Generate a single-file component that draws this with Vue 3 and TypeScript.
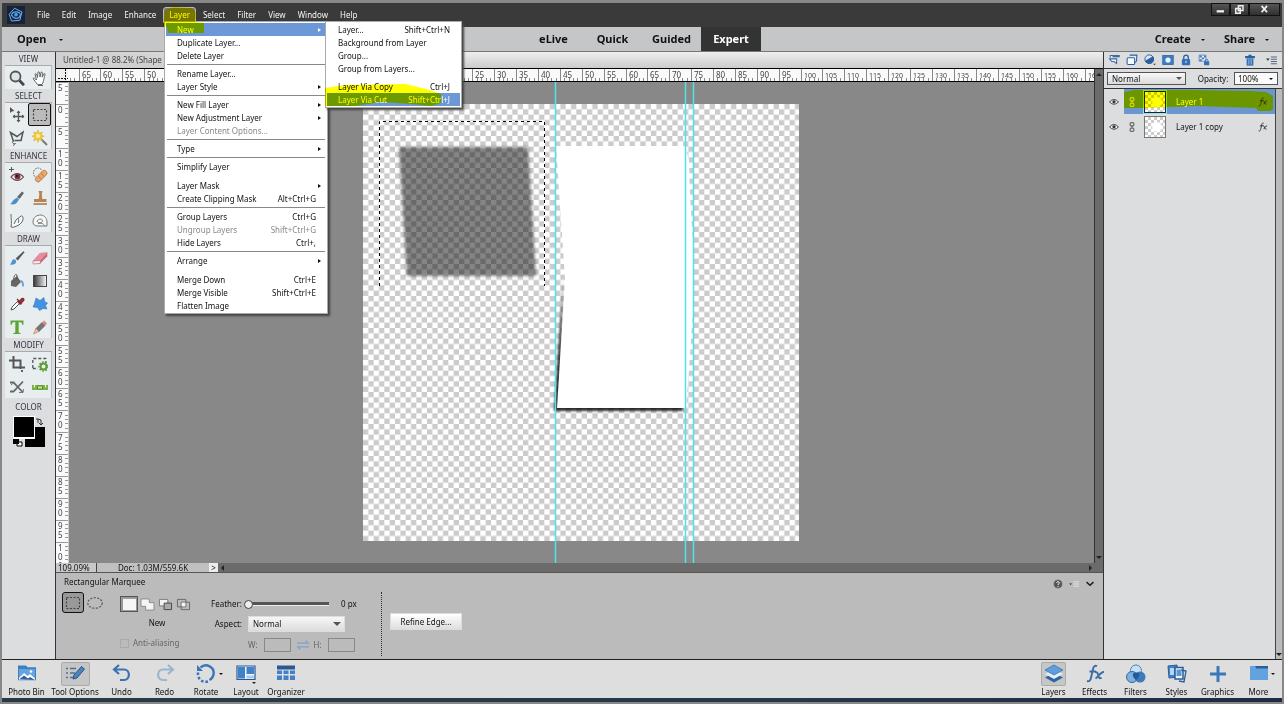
<script setup lang="ts">
import { ref } from 'vue'

interface MenuEntry {
  label?: string
  keys?: string
  sub?: boolean
  off?: boolean
  active?: boolean
  rule?: 'line' | 'space'
}

const menus = ['File', 'Edit', 'Image', 'Enhance', 'Layer', 'Select', 'Filter', 'View', 'Window', 'Help']
const modes = ['eLive', 'Quick', 'Guided', 'Expert']

const layerMenu: MenuEntry[] = [
  { label: 'New', sub: true, active: true },
  { label: 'Duplicate Layer...' },
  { label: 'Delete Layer' },
  { rule: 'line' },
  { label: 'Rename Layer...' },
  { label: 'Layer Style', sub: true },
  { rule: 'line' },
  { label: 'New Fill Layer', sub: true },
  { label: 'New Adjustment Layer', sub: true },
  { label: 'Layer Content Options...', off: true },
  { rule: 'line' },
  { label: 'Type', sub: true },
  { rule: 'line' },
  { label: 'Simplify Layer' },
  { rule: 'space' },
  { label: 'Layer Mask', sub: true },
  { label: 'Create Clipping Mask', keys: 'Alt+Ctrl+G' },
  { rule: 'line' },
  { label: 'Group Layers', keys: 'Ctrl+G' },
  { label: 'Ungroup Layers', keys: 'Shift+Ctrl+G', off: true },
  { label: 'Hide Layers', keys: 'Ctrl+,' },
  { rule: 'line' },
  { label: 'Arrange', sub: true },
  { rule: 'space' },
  { label: 'Merge Down', keys: 'Ctrl+E' },
  { label: 'Merge Visible', keys: 'Shift+Ctrl+E' },
  { label: 'Flatten Image' },
]

const newMenu: MenuEntry[] = [
  { label: 'Layer...', keys: 'Shift+Ctrl+N' },
  { label: 'Background from Layer' },
  { label: 'Group...' },
  { label: 'Group from Layers...' },
  { rule: 'space' },
  { label: 'Layer Via Copy', keys: 'Ctrl+J' },
  { label: 'Layer Via Cut', keys: 'Shift+Ctrl+J', active: true },
]

const toolGroups = [
  { name: 'VIEW', tools: ['zoom', 'hand'] },
  { name: 'SELECT', tools: ['move', 'marquee', 'lasso', 'wand'] },
  { name: 'ENHANCE', tools: ['redeye', 'heal', 'smart', 'stamp', 'smudge', 'sponge'] },
  { name: 'DRAW', tools: ['brush', 'eraser', 'bucket', 'gradient', 'dropper', 'shape', 'type', 'pencil'] },
  { name: 'MODIFY', tools: ['crop', 'recompose', 'cutter', 'straighten'] },
]

const icons: Record<string, string> = {
  zoom: '<circle cx="6.500" cy="6.500" r="5" fill="#dfe6e8" stroke="#555" stroke-width="1.800"/><path d="M10.500 10.500 15 15.200" stroke="#444" stroke-width="2.800"/>',
  hand: '<path d="M5.500 14.500C3.500 12 2.500 10.500 1 8.500c1-1 2.200 0 3.500 1.500L3 4c1-1 1.700 0 2.500 3.500L6 2c1.200-1 1.700 0 2 5l1.200-5c1.300-.5 1.300.7 1 5.200l2-3.700c1.200-.2.8 1.500-.2 5-.5 3-1 4-2 6z" fill="#fff" stroke="#555" stroke-width=".9"/><path d="M6 15.500h5" stroke="#666"/>',
  move: '<path d="M1 0v6l1.700-1.500L5.500 4z" fill="#555"/><path d="M9.500 4v11M4 9.500h11" stroke="#555" stroke-width="1.300"/><path d="M7.500 6l2-2.500 2 2.500zM7.500 13l2 2.500 2-2.500zM6 7.500l-2.500 2L6 11.500zM13 7.500l2.500 2-2.500 2z" fill="#555"/>',
  marquee: '<path d="M1.500 2.500h13v11h-13z" fill="none" stroke="#444" stroke-width="1.200" stroke-dasharray="2 1.500"/>',
  ellipse: '<ellipse cx="8" cy="8" rx="7.200" ry="5.300" fill="none" stroke="#555" stroke-width="1.200" stroke-dasharray="2 1.500"/>',
  lasso: '<path d="M4.500 11.500 1.500 2.500l6.500 4L14 2l-2 8.500H5.500" fill="none" stroke="#555" stroke-width="1.500"/><path d="M5 11c-2 0-2 3 .5 2.500S5 15 4 15.500" fill="none" stroke="#555"/>',
  wand: '<path d="M8.500 8.500 15 15" stroke="#777" stroke-width="2"/><path d="m6 0 1.200 3L10.500 2 9.200 5l3 1.200-3 1.200L10.500 11 7.200 9.300 6 12.500 4.800 9.300 1.500 11 2.800 7.500 0 6.200 2.800 5 1.500 2l3.300 1z" fill="#f3c93c" stroke="#d8a62a" stroke-width=".5"/><circle cx="6" cy="6" r="2" fill="#fff0a0"/>',
  redeye: '<path d="M0 2.500h5M2.500 0v5" stroke="#555"/><path d="M2 10c3.500-4.500 9-4.500 12.500 0-3.500 4.500-9 4.500-12.500 0z" fill="#eee" stroke="#6b4a50" stroke-width="1.200"/><circle cx="8.500" cy="9.500" r="3" fill="#7a3344"/><circle cx="8" cy="9" r="1" fill="#111"/>',
  heal: '<ellipse cx="6" cy="6" rx="4.500" ry="5" fill="none" stroke="#555" stroke-dasharray="1.500 1.200"/><g transform="rotate(-45 9 9)"><rect x="2" y="6.500" width="14" height="5.500" rx="2.500" fill="#e8a76c" stroke="#b9713c" stroke-width=".7"/><path d="M7 6.800v5M11 6.800v5" stroke="#c88650"/></g>',
  smart: '<path d="m8 7 5-5.500 2 1.500-4.500 6z" fill="#666"/><path d="M1 14c2-.5 2-3 4-4.500l3-2 2 2-2 3c-2 2.500-5 2-7 1.500z" fill="#4c8fc9"/>',
  stamp: '<path d="M6.500 1h4l-.7 3 .5 5h-3.500l.5-5zM2 9h12.500v3H2z" fill="#b98452"/><path d="M1.500 14h13.500" stroke="#9a6a3c" stroke-width="1.400"/>',
  smudge: '<path d="M2 1c0 5 1 8 0 13 3 1 5-1 8-2l3-3c2-3 1-7-1-6s-3 3-5 4l-2 4M9 5c1 2 1 4 0 5" fill="#f6f8f8" stroke="#666" stroke-width="1"/>',
  sponge: '<path d="M1 9C1 4 5 2 9 2c4 .5 6 4 6 7v4H6c-3 0-5-1-5-4z" fill="#f6f8f8" stroke="#777"/><path d="M5 8c2-3 6-2 5.500 0S6 11 5 8zm8 5c-2-3-4-3-7-2.500" fill="none" stroke="#777"/>',
  brush: '<path d="m7 8.500 7.500-7 .7.700-6.500 8z" fill="#555" stroke="#555" stroke-width=".6"/><path d="M1 14.500c1.500-1 1-3 3-5 1.500-1 4 1 3 3-1 2.200-4 2.500-6 2z" fill="#4b93d6"/>',
  eraser: '<path d="m1 11 7-8 7.500-.5-.3 4-7 7L1 14z" fill="#c9687c"/><path d="m1 11 7-8 7.500-.5-7 8z" fill="#e58d9e"/><path d="m1 11 7.500-.5-.3 3L1 14z" fill="#f7f0f0" stroke="#b5616f" stroke-width=".6"/>',
  bucket: '<path d="m2 8 6-5 4 6-5 5-5-1z" fill="#666"/><path d="M5 8c-1-7 3-8 3-5v4" fill="none" stroke="#555"/><path d="M11 7c3 0 4 2 4 6-1.500 1.500-2.500 0-2-2z" fill="#64a6de"/>',
  gradient: '<defs><linearGradient id="gradTool"><stop stop-color="#333"/><stop offset="1" stop-color="#fafafa"/></linearGradient></defs><rect x="1.500" y="2.500" width="13" height="11" fill="url(#gradTool)" stroke="#444"/>',
  dropper: '<path d="m2 14 1-3 6-6 2 2-6 6z" fill="#fff" stroke="#555"/><path d="m8 3 5 5M9.500 6.500l3-3.500c1-1.500 3 0 2 1.500l-3.500 3.500z" fill="#b0353f" stroke="#8b2833" stroke-width="1.400"/>',
  shape: '<path d="m4 2 4 2.500 4-3 .5 4 3 1.500-2 2.500 1.500 3.500-4-.5-3.500 2-2-3-4.500-.5 1.500-3.500z" fill="#4492e2" stroke="#3679bd" stroke-width=".6"/>',
  type: '<path d="M1.500 1.500h13v4.200h-1.200c-.4-2-1-2.700-3.600-2.700v9.800c0 1 .5 1.300 2 1.400v.8H4.300v-.8c1.500-.1 2-.4 2-1.400V3C3.700 3 3.100 3.700 2.700 5.700H1.500z" fill="#5da53b"/>',
  pencil: '<path d="m4 9.500 6-6 3 3-6 6z" fill="#777" stroke="#444" stroke-width=".6"/><path d="m10 3.500 2-2 3 3-2 2z" fill="#d98585"/><path d="m4 9.500 3 3L1.500 15z" fill="#eebf8b" stroke="#a66" stroke-width=".5"/>',
  crop: '<path d="M4.500 0v11.500H16M0 4.500h11.500V13" fill="none" stroke="#555" stroke-width="2"/><circle cx="13" cy="15" r="1" fill="#333"/>',
  recompose: '<path d="M.8 12V2.500h13V6M.8 12.500H6" fill="none" stroke="#555" stroke-width="1.300" stroke-dasharray="3 2"/><circle cx="11.500" cy="10.500" r="3" fill="none" stroke="#5c9c36" stroke-width="2"/><circle cx="11.500" cy="10.500" r="4.500" fill="none" stroke="#5c9c36" stroke-width="1.500" stroke-dasharray="1.700 1.500"/>',
  cutter: '<path d="M1 3.500h3.500L14 13.500M1 12.500h3.500L14 2.500" fill="none" stroke="#666" stroke-width="1.800"/><path d="M2 6 5.500 3M10 13.500h4l.5-3.500" fill="none" stroke="#777"/>',
  straighten: '<path d="M0 6h16v5H0z" fill="#78b046"/><path d="M5.500 7h5v3h-5z" fill="#c8e39c" stroke="#5c8d35"/><path d="M2.500 5.500v3M13.500 5.500v3" stroke="#e8efe6" stroke-width="1.200"/>',
  newLayer: '<path d="M3 5V2h12v1.500H6M2 6.500h9.500v6L8 10H5z" fill="#f3f8fd" stroke="#3e6ba3" stroke-width="1.400"/>',
  group: '<path d="M5 1.500h9.500l-.5 8-2.500 2.500" fill="#dbe8f7" stroke="#2c5f9e" stroke-width="1.400"/><rect x="1.500" y="5" width="10" height="9" rx="1.500" fill="#f7fbff" stroke="#2c5f9e" stroke-width="1.400"/>',
  adjust: '<circle cx="7" cy="7" r="5.800" fill="#dbe8f7" stroke="#2c5f9e" stroke-width="1.300"/><path d="M1.500 9 12 3a6 6 0 0 1-1 8.500A6 6 0 0 1 1.500 9z" fill="#2c5f9e"/><path d="m12 13 4 0-2 2z" fill="#444"/>',
  mask: '<rect x="1" y="2" width="14" height="12" fill="#3c7dc6" stroke="#2c5f9e"/><circle cx="8" cy="8" r="3.500" fill="#eaf2fb"/>',
  lock: '<path d="M5 7V4.500a3 3 0 0 1 6 0V7" fill="none" stroke="#2c5f9e" stroke-width="1.800"/><rect x="2.500" y="6.500" width="11" height="8.500" rx="1.500" fill="#3370b5"/><path d="M8 9v3" stroke="#dce9f8" stroke-width="1.300"/>',
  lockAlpha: '<path d="M1.500 1.500h9v8h-9z" fill="#e5eef9" stroke="#4a7bb5"/><path d="M2 2h3v2.500H2zM5 4.500h3V7H5zM8 2h2.500v2.500H8zM2 7h3v2.500H2z" fill="#4a7bb5"/><rect x="8" y="9.500" width="7" height="5.500" rx="1" fill="#3370b5"/><path d="M9.800 10V8.300c0-1.700 3.400-1.700 3.400 0V10" fill="none" stroke="#2c5f9e"/>',
  trash: '<path d="M1.500 2.500h13v3h-13zM6 1h4v2H6z" fill="#2c5f9e"/><path d="M3.500 6h9v9.500h-9z" fill="#3370b5"/><path d="M6.500 7v7M9.500 7v7" stroke="#bad0ea"/>',
  flyout: '<path d="M0 6h5L2.500 9z" fill="#334"/><path d="M6.500 4h8M6.500 7h8M6.500 10h8M6.500 13h8" stroke="#47597a" stroke-width="1.200"/>',
  flyoutPale: '<path d="M0 7h5L2.500 9.500z" fill="#333"/><path d="M7 4.500h9M7 8h9M7 11.500h9" stroke="#e2e2e2" stroke-width="1.500"/>',
  help: '<circle cx="8" cy="8" r="6.500" fill="#555" stroke="#777"/><path d="M5.800 6.300c.2-3 4.500-2.500 4.300 0-.1 1.500-2 1.500-2 3.200M8 11v1.500" fill="none" stroke="#fff" stroke-width="1.500"/>',
  chevron: '<path d="m2.500 5 5.500 5 5.500-5" fill="none" stroke="#222" stroke-width="2.500"/>',
  eye: '<path d="M1 8c3.500-5 10.500-5 14 0-3.500 4.500-10.500 4.500-14 0z" fill="#eee" stroke="#333" stroke-width="1.500"/><circle cx="8" cy="7.600" r="2.500" fill="#333"/>',
  link: '<path d="M8 5v6" stroke="currentColor" stroke-width="1.500"/><rect x="5" y="1" width="6" height="5.500" rx="2" fill="none" stroke="currentColor" stroke-width="1.800"/><rect x="5" y="9.500" width="6" height="5.500" rx="2" fill="none" stroke="currentColor" stroke-width="1.800"/>',
  fx: '<path d="M1 14c2.500 1 3-1 3.500-3.500L6 4c.5-2 1.500-3 3-2.200M3 6h5.500M8 6.500c2-1 2 1 2.700 3 .6 2 1.300 2.500 2.800 1.500M14.500 6c-2.500 0-3.500 3.500-5.500 5.500" fill="none" stroke="currentColor" stroke-width="1.500"/>',
  swap: '<path d="M0 5.500h15L11.500 2M16 10.500H1L4.500 14" fill="none" stroke="#82a3c9" stroke-width="1.700"/>',
  photoBin: '<path d="M1 1.500h8l1.500 1.800H19v13H1z" fill="#3d7fc4"/><path d="M2 5h16v10H2z" fill="#65a4df"/><path d="m2 14 5-5 3.500 3L13 10l5 4.500v1.500H2z" fill="#fff"/><path d="m2 15.500 5-4 4 3 2-1.500 5 3z" fill="#2f619d"/><circle cx="14" cy="7.500" r="1.300" fill="#fff"/>',
  toolOptions: '<path d="M1 4.500h2M5 4.500h6M1 9h2M5 9h5M1 13.500h2M5 13.500h3" stroke="#53718f" stroke-width="1.700"/><path d="m8 15 1-4 7.500-8.500 3 2.500L12 14z" fill="#4b86c4" stroke="#2d5380"/>',
  undo: '<path d="M7 1 2 5.500 7 10M2.500 5.500H12c6.500 0 6.500 10.500 0 10.500H8" fill="none" stroke="#3a73b2" stroke-width="2.200"/>',
  redo: '<path d="m13 1 5 4.500-5 4.500M17.500 5.500H8c-6.500 0-6.500 10.500 0 10.500h4" fill="none" stroke="#9bb5cf" stroke-width="2.200"/>',
  rotate: '<path d="M4.500 3.500C10-1.500 19 3 17.500 10.500c-.5 2.500-2 4.500-4 5.500" fill="none" stroke="#3b76b8" stroke-width="2.400"/><path d="M1 1v6h6z" fill="#3b76b8"/><path d="M12 17.500C5 19 1.500 14 2 8.500" fill="none" stroke="#3b76b8" stroke-width="2.600" stroke-dasharray="2.500 2"/>',
  layout: '<path d="M1 2h18v13.500H1z" fill="#eef5fc" stroke="#2a5890" stroke-width="1.200"/><path d="M2 3h7v11.500H2zM10.500 3H18v7h-7.500z" fill="#3f82c9"/><path d="M10.500 11.500H18v3h-7.500z" fill="#a9cbec"/><path d="m16 18 4 0-2 2z" fill="#222"/>',
  organizer: '<path d="M1 1.500h18v4H1z" fill="#2a5890"/><path d="M1 6.500h5v3.500H1zM7.500 6.500h5v3.500h-5zM14 6.500h5v3.500h-5zM1 11.500h5V16H1zM7.500 11.500h5V16h-5zM14 11.500h5V16h-5z" fill="#3f82c9"/>',
  layers: '<path d="m10 9 9 4.500-9 5-9-5z" fill="#2e659f"/><path d="m10 5.500 9 4.500-9 5-9-5z" fill="#e2eefa"/><path d="m10 1 9 5-9 5-9-5z" fill="#5f9ed8" stroke="#3a76b5" stroke-width=".8"/>',
  effects: '<path d="M2 17c3 1 3.800-1.500 4.300-4.500L8 5c.6-2.800 2-3.800 4-2.800M4.500 7.500H11M10 8.500c2-1.200 2.700.5 3.300 3 .7 2.700 1.500 3.500 3.200 2M19 8c-3.500-.5-5 4.500-8.500 6.500" fill="none" stroke="#3a6da8" stroke-width="1.900"/>',
  filters: '<circle cx="10" cy="6.500" r="5.500" fill="#c6dff5" stroke="#4c82ba"/><circle cx="6" cy="13" r="5.500" fill="#75addf" fill-opacity=".9" stroke="#35699f"/><circle cx="14" cy="13" r="5.500" fill="#2d6fb5" fill-opacity=".9"/><path d="M7 9.500a5.500 5.500 0 0 1 6 0 5.500 5.500 0 0 1-3 6 5.500 5.500 0 0 1-3-6z" fill="#245a97"/>',
  styles: '<path d="m1 2 9-1 1 12-9 1z" fill="#3f82c9" stroke="#2c5e97"/><path d="M8 3.500h8V15H8z" fill="#eef5fc" stroke="#2c5e97" stroke-width="1.500"/><path d="m14 6 5 1-2 11-5-1" fill="none" stroke="#2c5e97" stroke-width="1.300"/><path d="M9.500 5.500h5V12h-5z" fill="#5a98d6"/><path d="M3 4h4v7H3z" fill="#b9d6f0"/>',
  graphics: '<path d="M10 2v16M2 10h16" stroke="#3b78ba" stroke-width="3"/>',
  more: '<path d="M1 2h18v14H1z" fill="#62a2df"/><path d="M1 2h5l1.500 2.500H19V2z" fill="#2c5e97"/>',
}

const leftTasks = [
  { name: 'Photo Bin', icon: 'photoBin' },
  { name: 'Tool Options', icon: 'toolOptions', on: true },
  { name: 'Undo', icon: 'undo' },
  { name: 'Redo', icon: 'redo' },
  { name: 'Rotate', icon: 'rotate', more: true },
  { name: 'Layout', icon: 'layout' },
  { name: 'Organizer', icon: 'organizer' },
]
const rightTasks = [
  { name: 'Layers', icon: 'layers', on: true },
  { name: 'Effects', icon: 'effects' },
  { name: 'Filters', icon: 'filters' },
  { name: 'Styles', icon: 'styles' },
  { name: 'Graphics', icon: 'graphics' },
  { name: 'More', icon: 'more', more: true },
]

const panelIcons = ['newLayer', 'group', 'adjust', 'mask', 'lock', 'lockAlpha']
const layers = [
  { name: 'Layer 1', on: true },
  { name: 'Layer 1 copy', on: false },
]
const combine = ['New', 'Add', 'Subtract', 'Intersect']

const feather = ref(0)
const aspect = ref('Normal')
const blend = ref('Normal')
const opacity = ref('100%')
const zoomLevel = ref('109.09%')
const antiAlias = ref(false)

/* Ruler geometry: one unit is `step` wide, the document's origin is at `left`, `top`. */
const step = 4.376
const left = 307
const top = 22
/* The open menus lie over this stretch of the horizontal ruler. */
const covered = (n: number) => n > -47 && n < 21
const hTicks = Array.from({ length: 236 }, (_, i) => i - 69).map((n) => ({
  n,
  x: Math.round(left + n * step),
  major: n % 5 === 0,
  labelled: n % 5 === 0 && !covered(n),
}))
const vTicks = Array.from({ length: 110 }, (_, i) => i - 5).map((n) => ({
  n,
  y: Math.round(top + n * step),
  major: n % 5 === 0,
}))
</script>

<template>
  <div class="app">
    <header class="menubar">
      <svg class="logo" viewBox="0 0 24 24">
        <rect width="24" height="24" fill="#14233f" />
        <path d="m10 3 10 5-3 11-11 1-3-9z" fill="none" stroke="#7fb2de" stroke-width="1.3" />
        <path d="M6 12c2-6 11-5 12 0-2 6-9 6-12 0z" fill="none" stroke="#62a8e8" stroke-width="1.5" />
        <circle cx="12" cy="11.500" r="2.500" fill="#3aa0f0" />
      </svg>
      <nav>
        <button v-for="m in menus" :key="m" class="menu" :class="{ open: m === 'Layer' }">{{ m }}</button>
      </nav>
      <div class="win">
        <button aria-label="Minimize"><svg viewBox="0 0 16 12"><path d="M4 8h8" stroke="#eee" stroke-width="2.500" /></svg></button>
        <button aria-label="Restore"><svg viewBox="0 0 16 12"><path d="M7 2h5v5H7zM4 5h5v5H4z" fill="#555" stroke="#eee" stroke-width="1.600" /></svg></button>
        <button aria-label="Close" class="wide"><svg viewBox="0 0 16 12"><path d="m5 2 6 7M11 2 5 9" stroke="#eee" stroke-width="2" /></svg></button>
      </div>
    </header>

    <div class="modebar">
      <div class="side"><button class="big first">Open<i class="tiny"></i></button></div>
      <div class="modes">
        <button v-for="m in modes" :key="m" :class="{ on: m === 'Expert' }">{{ m }}</button>
      </div>
      <div class="side right">
        <button class="big">Create<i class="tiny"></i></button>
        <button class="big">Share<i class="tiny"></i></button>
      </div>
    </div>

    <main class="work">
      <aside class="tools">
        <section v-for="g in toolGroups" :key="g.name">
          <h2>{{ g.name }}</h2>
          <div class="grid">
            <button v-for="t in g.tools" :key="t" :class="{ on: t === 'marquee' }" :aria-label="t">
              <svg viewBox="0 0 16 16" v-html="icons[t]"></svg>
            </button>
          </div>
        </section>
        <h2 class="last">COLOR</h2>
        <svg class="swatch" viewBox="0 0 34 34">
          <path d="M12 11h20v20H12z" />
          <path d="M0 0h22v23H0z" fill="#fff" />
          <path d="M1 1h20v20H1z" />
          <path d="M4 26h5v4H4z" fill="#fff" stroke="#000" />
          <path d="M0 23h6v5H0z" />
          <path d="M25 7V3h-2m2 0 3 1m0 0v4m-2-1 2 2 2-2" fill="none" stroke="#333" />
        </svg>
      </aside>

      <div class="center">
        <div class="tabs">Untitled-1 @ 88.2% (Shape</div>
        <div class="stage">
          <div class="viewport">
            <svg class="hruler" viewBox="0 0 1038 12" preserveAspectRatio="xMinYMin slice">
              <g v-for="t in hTicks" :key="t.n">
                <rect v-if="t.x > 12" :x="t.x" :y="t.major ? 0 : 9" width="1" :height="t.major ? 12 : 3" fill="#888" />
                <text v-if="t.labelled && t.x > 12" :x="t.x + 3" y="9" :font-size="t.n > 99 ? 7 : 8">{{ Math.abs(t.n) }}</text>
              </g>
              <rect width="12" height="12" fill="#eee" />
              <path d="M2 9.500h10M9.500 0v12" stroke="#111" stroke-dasharray="2 1" />
            </svg>
            <div class="lower">
              <svg class="vruler" viewBox="0 0 12 481" preserveAspectRatio="xMinYMin slice">
                <g v-for="t in vTicks" :key="t.n">
                  <rect :x="t.major ? 0 : 9" :y="t.y" :width="t.major ? 12 : 3" height="1" fill="#999" />
                  <template v-if="t.major">
                    <text v-for="(d, i) in String(Math.abs(t.n))" :key="i" x="2" :y="t.y + 9 + i * 9" font-size="8">{{ d }}</text>
                  </template>
                </g>
              </svg>
              <svg class="canvas" viewBox="69 82 1025 481" preserveAspectRatio="xMidYMid meet">
                <defs>
                  <pattern id="checker" width="32" height="32" patternUnits="userSpaceOnUse" patternTransform="translate(363 104) scale(.3333)">
                    <rect width="32" height="32" fill="#fff" />
                    <path d="M0 16h16v16H0zM16 0h16v16H16z" fill="#cbcbcb" />
                  </pattern>
                  <filter id="soft" x="-10%" y="-10%" width="120%" height="120%"><feGaussianBlur stdDeviation="1.800" /></filter>
                  <filter id="edge" x="-10%" y="-10%" width="120%" height="120%"><feGaussianBlur stdDeviation="1" /></filter>
                </defs>
                <rect x="363" y="104" width="436" height="437" fill="url(#checker)" shape-rendering="crispEdges" />
                <path d="M399 147h129l8 129H407z" fill-opacity=".48" filter="url(#soft)" />
                <path d="m563 280-9 131h129v-5H560z" fill-opacity=".8" filter="url(#edge)" />
                <path d="M556 146h129l4 14 1 35 3 50v65l-3 45-4 53H557l8-129z" fill="#fff" />
                <path d="M379.500 286V121.500h165V286" fill="none" stroke="#fff" />
                <path d="M379.500 286V121.500h165V286" fill="none" stroke="#000" stroke-dasharray="3 3" />
                <path d="M555.500 82v481M685.500 82v481M693.500 82v481" stroke="#4be6e6" stroke-width="1.500" />
              </svg>
            </div>
          </div>
          <div class="vscroll"><i class="up"></i><i class="down"></i></div>
        </div>
        <div class="status">
          <input v-model="zoomLevel" aria-label="Zoom level" />
          <span>Doc: 1.03M/559.6K</span>
          <button aria-label="Document info">&gt;</button>
          <div class="hscroll"><i class="back"></i><i class="fwd"></i></div>
        </div>
        <section class="options">
          <div class="head">
            <span>Rectangular Marquee</span>
            <div class="headicons">
              <button v-for="i in ['help', 'flyoutPale', 'chevron']" :key="i" :aria-label="i"><svg viewBox="0 0 16 16" v-html="icons[i]"></svg></button>
            </div>
          </div>
          <div class="body">
            <div class="pick">
              <button class="on" aria-label="Rectangular"><svg viewBox="0 0 16 16" v-html="icons.marquee"></svg></button>
              <button aria-label="Elliptical"><svg viewBox="0 0 16 16" v-html="icons.ellipse"></svg></button>
            </div>
            <div class="combine">
              <div class="combos">
                <button v-for="(c, i) in combine" :key="c" :class="{ on: i === 0 }" :aria-label="c">
                  <svg viewBox="0 0 16 14">
                    <rect v-if="i === 0" x="1" y="1" width="14" height="12" fill="#f6f6f6" />
                    <path v-if="i === 1" d="M1 1h9v4h5v8H6V9H1z" fill="#f4f4f4" stroke="#888" />
                    <path v-if="i === 2" d="M1.500 1.500h9v7h-9z" fill="#f4f4f4" stroke="#777" />
                    <path v-if="i === 2" d="M6.500 5.500h8v7h-8z" fill="#aaa" stroke="#444" />
                    <path v-if="i === 3" d="M1.500 1.500h9v8h-9zM5.500 4.500h9v8h-9z" fill="none" stroke="#666" />
                    <path v-if="i === 3" d="M6 5h4v4H6z" fill="#f4f4f4" />
                  </svg>
                </button>
              </div>
              <span class="caption">New</span>
              <label class="dim anti"><input v-model="antiAlias" type="checkbox" disabled />Anti-aliasing</label>
            </div>
            <div class="fields">
              <label for="feather">Feather:</label>
              <div class="line"><input id="feather" v-model="feather" type="range" min="0" max="250" /><output>{{ feather }} px</output></div>
              <label for="aspect">Aspect:</label>
              <div class="line inset"><div class="pop"><select id="aspect" v-model="aspect"><option>Normal</option></select></div></div>
              <span></span>
              <div class="line inset dim">
                <label for="w">W:</label><input id="w" class="num" disabled />
                <svg viewBox="0 0 16 16" v-html="icons.swap"></svg>
                <label for="h">H:</label><input id="h" class="num" disabled />
              </div>
            </div>
            <div class="refine"><button>Refine Edge...</button></div>
          </div>
        </section>
      </div>

      <aside class="panel">
        <div class="picons">
          <button v-for="i in panelIcons" :key="i" :aria-label="i"><svg viewBox="0 0 16 16" v-html="icons[i]"></svg></button>
          <span class="grow"></span>
          <button aria-label="trash"><svg viewBox="0 0 16 16" v-html="icons.trash"></svg></button>
          <button aria-label="menu"><svg viewBox="0 0 16 16" v-html="icons.flyout"></svg></button>
        </div>
        <div class="blend">
          <div class="pop"><select v-model="blend" aria-label="Blend mode"><option>Normal</option></select></div>
          <label for="opacity">Opacity:</label>
          <div class="pct"><input id="opacity" v-model="opacity" /><i class="tiny"></i></div>
        </div>
        <div class="list">
          <ul>
            <li v-for="l in layers" :key="l.name" :class="{ on: l.on }">
              <button class="eye" :aria-label="'Show ' + l.name"><svg viewBox="0 0 16 16" v-html="icons.eye"></svg></button>
              <div class="entry">
                <svg class="chain" viewBox="0 0 16 16" v-html="icons.link"></svg>
                <span class="thumb"></span>
                <span class="name">{{ l.name }}</span>
                <svg class="fx" viewBox="0 0 16 16" v-html="icons.fx"></svg>
                <svg v-if="l.on" class="marker" viewBox="0 0 151 25" preserveAspectRatio="none">
                  <path d="M0 3 10 1h58l60 1 14 1 4 2 3 2v14l-3 1h-12l-2-3-60-2-51 2H0z" fill="#ff0" />
                </svg>
              </div>
            </li>
          </ul>
          <div class="lscroll"><i class="down"></i></div>
        </div>
      </aside>
    </main>

    <footer class="taskbar">
      <div class="tasks lefts">
        <button v-for="t in leftTasks" :key="t.name">
          <span class="pic" :class="{ on: t.on }"><svg viewBox="0 0 20 20" v-html="icons[t.icon]"></svg><i v-if="t.more" class="tiny"></i></span>{{ t.name }}
        </button>
      </div>
      <div class="tasks rights">
        <button v-for="t in rightTasks" :key="t.name">
          <span class="pic" :class="{ on: t.on }"><svg viewBox="0 0 20 20" v-html="icons[t.icon]"></svg><i v-if="t.more" class="tiny"></i></span>{{ t.name }}
        </button>
      </div>
    </footer>
    <div class="desk"></div>

    <div class="drop main">
      <template v-for="(e, i) in layerMenu" :key="i">
        <hr v-if="e.rule" :class="e.rule" />
        <button v-else :class="{ active: e.active }" :disabled="e.off">
          <span>{{ e.label }}</span><kbd v-if="e.keys">{{ e.keys }}</kbd><i v-if="e.sub" class="arrow"></i>
        </button>
      </template>
    </div>
    <div class="drop sub">
      <template v-for="(e, i) in newMenu" :key="i">
        <hr v-if="e.rule" :class="e.rule" />
        <button v-else :class="{ active: e.active }">
          <span>{{ e.label }}</span><kbd v-if="e.keys">{{ e.keys }}</kbd>
        </button>
      </template>
    </div>
    <svg class="marks" viewBox="0 0 300 110">
      <path d="M5 5 14 2l18 1 5 5-2 9 9 1v10H8l-1-6-4-1z" fill="#ff0" />
      <path d="M165 83l20-3 60-1 25 6 11 4v9l-10 3-20-2-30-2-26 4h-30z" fill="#ff0" />
    </svg>
  </div>
</template>

<style>
body {
  margin: 0;
  background: #888;
}
</style>

<style scoped>
* {
  box-sizing: border-box;
}
.app {
  position: relative;
  display: flex;
  flex-direction: column;
  min-height: 100vh;
  padding: 3px 2px 2px;
  background: #888;
  color: #111;
  font: 8px/12px "Noto Sans", "Open Sans", sans-serif;
}
button,
input,
select {
  margin: 0;
  padding: 0;
  border: 0;
  border-radius: 0;
  background: none;
  color: inherit;
  font: inherit;
  outline: none;
}
svg {
  display: block;
}
.tiny {
  display: inline-block;
  border: 2px solid transparent;
  border-top-color: #111;
  border-bottom: 0;
}
.menubar {
  display: flex;
  height: 24px;
  background: #3a3a3a;
  color: #f4f4f4;
}
.logo {
  width: 18px;
  height: 18px;
  margin: 3px 0 0 5px;
}
nav {
  display: flex;
  align-items: center;
  padding-left: 6px;
}
.menu {
  height: 16px;
  padding: 0 6px;
}
.menu.open {
  margin: 0 1px;
  padding: 0 5px;
  border: 1px solid #bbb;
  border-radius: 3px 3px 0 0;
  background: #777;
  color: #fff;
  line-height: 10px;
}
.win {
  display: flex;
  height: 13px;
  margin: 0 2px 0 auto;
}
.win button {
  width: 19px;
  border: 1px solid #111;
  background: linear-gradient(#555, #303030);
}
.win button.wide {
  width: 31px;
}
.win svg {
  height: 11px;
  margin: 0 auto;
}
.modebar {
  display: flex;
  align-items: stretch;
  height: 25px;
  border-bottom: 1px solid #777;
  background: #c5c6c8;
}
.side {
  display: flex;
  flex: 1;
}
.big,
.modes button {
  font-size: 11px;
  font-weight: 700;
  color: #111;
}
.big .tiny {
  margin: 0 0 2px 10px;
}
.big.first {
  padding-left: 15px;
}
.big.first .tiny {
  margin-left: 13px;
}
.modes {
  display: flex;
  padding-left: 14px;
}
.modes button {
  width: 59px;
}
.modes button.on {
  width: 60px;
  background: #333;
  color: #fff;
}
.right {
  justify-content: flex-end;
  gap: 19px;
  padding-right: 13px;
}
.work {
  display: flex;
  flex: 1;
  min-height: 0;
  border-bottom: 1px solid #222;
}
.tools {
  flex: none;
  width: 54px;
  padding: 0 3px;
  border-right: 1px solid #333;
  background: #dcddde;
}
h2 {
  height: 13px;
  margin: 0;
  font: 8px/14px "Noto Sans", "Open Sans", sans-serif;
  text-align: center;
  color: #334;
}
h2.last {
  margin-top: 2px;
}
.grid {
  display: grid;
  grid-template-columns: 1fr 1fr;
  border-top: 1px solid #aaa;
  border-right: 1px solid #bbb;
  background: #e8eeef;
}
.grid button {
  display: flex;
  align-items: center;
  justify-content: center;
  height: 23px;
}
.grid button.on {
  border: 1px solid #111;
  border-radius: 2px;
  background: #bbb;
}
.grid svg {
  width: 16px;
  height: 16px;
}
.swatch {
  width: 34px;
  height: 34px;
  margin: 3px 0 0 8px;
}
.center {
  display: flex;
  flex: 1;
  flex-direction: column;
  min-width: 0;
}
.tabs {
  height: 17px;
  padding-left: 7px;
  border-bottom: 1px solid #000;
  background: linear-gradient(90deg, #cfcfcf, transparent 40%), linear-gradient(#efefef, #ccc);
  line-height: 15px;
  color: #444;
}
.stage {
  display: flex;
  flex: 1;
  min-height: 0;
}
.viewport {
  display: flex;
  flex: 1;
  flex-direction: column;
  min-width: 0;
}
.hruler {
  flex: none;
  width: 100%;
  height: 13px;
  border-bottom: 1px solid #000;
  background: #fafafa;
}
.lower {
  display: flex;
  flex: 1;
  min-height: 0;
}
.vruler {
  flex: none;
  width: 13px;
  height: 100%;
  border-right: 1px solid #ccc;
  background: #fafafa;
}
.vruler text,
.hruler text {
  fill: #444;
}
.canvas {
  flex: 1;
  min-width: 0;
  height: 100%;
  background: #888;
}
.vscroll {
  display: flex;
  flex-direction: column;
  align-items: center;
  justify-content: space-between;
  width: 9px;
  padding: 4px 0;
  border-left: 1px solid #333;
  background: #6b6b6b;
}
.up,
.down {
  border: 3px solid transparent;
  border-top: 0;
  border-bottom-color: #222;
}
.down {
  border-top: 3px solid #222;
  border-bottom: 0;
}
.status {
  display: flex;
  height: 10px;
  background: #c0c0c0;
  border-bottom: 1px solid #555;
  line-height: 9px;
}
.status input {
  width: 41px;
  height: 9px;
  padding-left: 2px;
  border-right: 1px solid #444;
  background: #c8c8c8;
}
.status span {
  width: 112px;
  text-align: center;
}
.status button {
  width: 9px;
  background: #eee;
  line-height: 9px;
}
.hscroll {
  display: flex;
  flex: 1;
  align-items: center;
  justify-content: space-between;
  padding: 0 11px 0 3px;
  background: #6b6b6b;
}
.back,
.fwd {
  border: 3px solid transparent;
  border-left: 0;
  border-right-color: #222;
}
.fwd {
  border-left: 3px solid #222;
  border-right: 0;
}
.options {
  height: 86px;
  background: #bbb;
}
.head {
  display: flex;
  justify-content: space-between;
  height: 19px;
  padding: 3px 8px 0;
}
.headicons {
  display: flex;
  gap: 6px;
}
.headicons svg {
  width: 10px;
  height: 10px;
}
.body {
  display: flex;
}
.pick {
  display: flex;
  width: 58px;
  padding-left: 6px;
}
.pick button {
  display: flex;
  align-items: center;
  justify-content: center;
  width: 22px;
  height: 21px;
}
.pick button.on {
  border: 1px solid #111;
  border-radius: 3px;
  background: #999;
}
.pick svg {
  width: 16px;
  height: 16px;
}
.combine {
  display: flex;
  flex-direction: column;
  width: 90px;
  padding: 4px 0 0 6px;
}
.combos {
  display: flex;
}
.combos button {
  display: flex;
  align-items: center;
  justify-content: center;
  width: 18px;
  height: 16px;
}
.combos button.on {
  border: 1px solid #555;
  background: #999;
}
.combos svg {
  width: 15px;
  height: 13px;
}
.caption {
  width: 74px;
  margin: 5px 0 8px;
  text-align: center;
}
.dim {
  color: #666;
}
.anti {
  display: flex;
  gap: 4px;
}
.anti input {
  width: 9px;
  height: 9px;
  margin-top: 2px;
  border: 1px solid #aaa;
  appearance: none;
}
.fields {
  display: grid;
  grid-template-columns: 38px 1fr;
  grid-template-rows: 20px 20px 22px;
  column-gap: 2px;
  align-items: center;
  width: 178px;
  padding-top: 2px;
  border-right: 1px dotted #333;
}
.fields > label {
  text-align: right;
  white-space: nowrap;
}
.line {
  display: flex;
  align-items: center;
}
.line.inset {
  padding-left: 4px;
}
.line input[type="range"] {
  width: 85px;
  height: 10px;
  appearance: none;
  background: linear-gradient(transparent 3px, #555 3px, #555 6px, #eee 6px, #eee 7px, transparent 7px) 4px 0 no-repeat;
}
.line input[type="range"]::-webkit-slider-thumb {
  width: 9px;
  height: 9px;
  border: 1px solid #444;
  border-radius: 50%;
  background: #eee;
  appearance: none;
}
.line output {
  margin-left: 12px;
}
.pop {
  position: relative;
  width: 97px;
  height: 16px;
  border: 1px solid #ddd;
  background: linear-gradient(#f7f7f7, #dcdcdc);
}
.pop select {
  width: 100%;
  height: 100%;
  padding-left: 4px;
  appearance: none;
}
.pop::after {
  position: absolute;
  top: 5px;
  right: 3px;
  border: 4px solid transparent;
  border-top-color: #555;
  border-bottom: 0;
  content: "";
  pointer-events: none;
}
.num {
  width: 27px;
  height: 14px;
  margin: 0 6px;
  border: 1px solid #888;
}
.line svg {
  width: 12px;
  height: 12px;
  margin-right: 5px;
}
.refine {
  padding: 21px 0 0 8px;
}
.refine button {
  width: 72px;
  height: 17px;
  border: 1px solid #ddd;
  background: linear-gradient(#fff, #dedede);
}
.panel {
  display: flex;
  flex: none;
  flex-direction: column;
  width: 179px;
  border-left: 1px solid #333;
  background: #dcddde;
}
.picons {
  display: flex;
  align-items: center;
  gap: 6px;
  height: 17px;
  padding: 0 4px 0 4px;
  border-bottom: 1px solid #333;
}
.picons svg {
  width: 12px;
  height: 12px;
}
.grow {
  flex: 1;
}
.picons button:last-child {
  margin-left: 4px;
}
.blend {
  display: flex;
  align-items: center;
  justify-content: space-between;
  height: 20px;
  padding: 0 4px 0 3px;
  border-bottom: 1px solid #333;
}
.blend .pop {
  width: 79px;
  height: 13px;
  border-color: #555;
}
.blend .pop::after {
  top: 4px;
  border-width: 3px;
  border-bottom: 0;
}
.pct {
  display: flex;
  align-items: center;
  width: 44px;
  height: 13px;
  padding-right: 4px;
  border: 1px solid #555;
  background: #fafafa;
}
.pct input {
  width: 34px;
  height: 11px;
  padding-left: 3px;
}
.blend label {
  margin-left: 6px;
}
.list {
  display: flex;
  flex: 1;
}
ul {
  flex: 1;
  margin: 0;
  padding: 0;
  list-style: none;
}
li {
  display: flex;
  height: 25px;
}
.eye {
  width: 20px;
}
.eye svg {
  width: 10px;
  height: 10px;
  margin: 0 auto;
}
.entry {
  position: relative;
  display: flex;
  flex: 1;
  align-items: center;
  isolation: isolate;
}
li.on .entry {
  background: #6c96cf;
  color: #fff;
}
.chain {
  width: 10px;
  height: 10px;
  margin: 0 7px 0 3px;
  color: #666;
}
li.on .chain {
  color: #ddd;
}
.thumb {
  width: 22px;
  height: 22px;
  border: 1px solid #777;
  background: radial-gradient(circle at 60% 50%, #fff 4px, transparent 6px), conic-gradient(#ccc 25%, #fff 0 50%, #ccc 0 75%, #fff 0) 0 0 / 6px 6px;
}
li.on .thumb {
  border: 1px solid #222;
  outline: 1px solid #8fe4f8;
}
.name {
  flex: 1;
  padding-left: 10px;
}
.fx {
  width: 10px;
  height: 10px;
  margin-right: 7px;
  color: #333;
}
.marker {
  position: absolute;
  inset: 0;
  width: 100%;
  height: 25px;
  mix-blend-mode: multiply;
}
.lscroll {
  display: flex;
  flex-direction: column;
  justify-content: flex-end;
  width: 7px;
  padding-bottom: 3px;
  border-left: 1px solid #444;
  background: #bbb;
}
.taskbar {
  display: flex;
  justify-content: space-between;
  height: 38px;
  background: #dededf;
}
.tasks {
  display: flex;
}
.tasks button {
  display: flex;
  flex-direction: column;
  align-items: center;
  width: 41px;
  padding-top: 2px;
  line-height: 12px;
  white-space: nowrap;
}
.lefts {
  padding-left: 1px;
}
.lefts button {
  width: 40px;
}
.lefts button:nth-child(1) {
  width: 47px;
}
.lefts button:nth-child(2) {
  width: 50px;
}
.lefts button:nth-child(3),
.lefts button:nth-child(4) {
  width: 43px;
}
.rights {
  padding-right: 3px;
}
.pic {
  position: relative;
  display: flex;
  align-items: center;
  justify-content: center;
  width: 25px;
  height: 24px;
}
.pic svg {
  width: 20px;
  height: 20px;
}
.pic .tiny {
  position: absolute;
  top: 11px;
  right: -4px;
}
.pic.on {
  border: 1px solid #aaa;
  border-radius: 2px;
  background: #c6c6c6;
}
.lefts .pic.on {
  width: 29px;
}
.desk {
  height: 4px;
  background: linear-gradient(90deg, #263b46, #26384a 60%, #1f2a44);
}
.drop {
  position: absolute;
  padding: 1px;
  border: 1px solid #aaa;
  background: #fff;
  box-shadow: 2px 2px 2px #444;
}
.main {
  top: 21px;
  left: 164px;
  width: 164px;
}
.sub {
  top: 21px;
  left: 325px;
  width: 137px;
}
.drop button {
  display: flex;
  align-items: center;
  justify-content: space-between;
  width: 100%;
  height: 13px;
  padding: 0 10px 0 11px;
}
.drop button:disabled {
  color: #888;
}
.drop button.active {
  background: #6c98d8;
  color: #fff;
}
kbd {
  font: inherit;
}
.arrow {
  margin-right: -5px;
  border: 2px solid transparent;
  border-left: 3px solid currentColor;
  border-right: 0;
}
hr {
  height: 1px;
  margin: 2px 1px;
  border: 0;
  background: #888;
}
hr.space {
  height: 2px;
  background: none;
}
.sub hr.space {
  height: 1px;
}
.marks {
  position: absolute;
  top: 5px;
  left: 160px;
  width: 300px;
  height: 110px;
  mix-blend-mode: multiply;
  pointer-events: none;
}
</style>
